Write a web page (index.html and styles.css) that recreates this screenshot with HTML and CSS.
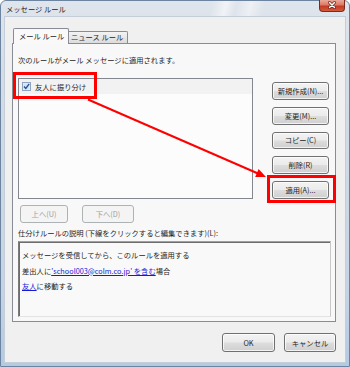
FILE: index.html
```html
<!DOCTYPE html>
<html lang="ja">
<head>
<meta charset="utf-8">
<title>メッセージ ルール</title>
<link rel="stylesheet" href="styles.css">
</head>
<body>
<div class="window">
  <div class="titlebar">
    <span class="title">メッセージ ルール</span>
    <div class="close">
      <svg width="24" height="11" viewBox="0 0 24 11">
        <path d="M9.5 2.5 L14.5 7.5 M14.5 2.5 L9.5 7.5" stroke="#6b1d12" stroke-width="3" stroke-linecap="round"/>
        <path d="M9.5 2.5 L14.5 7.5 M14.5 2.5 L9.5 7.5" stroke="#ffffff" stroke-width="1.5" stroke-linecap="round"/>
      </svg>
    </div>
  </div>
  <div class="client">
    <div class="tabs">
      <div class="tab active">メール ルール</div>
      <div class="tab">ニュース ルール</div>
    </div>
    <div class="panel">
      <div class="intro">次のルールがメール メッセージに適用されます。</div>
      <div class="rules-row">
        <div class="list">
          <div class="item">
            <span class="check">
              <svg width="9" height="9" viewBox="0 0 9 9">
                <rect x="0.5" y="0.5" width="8" height="8" fill="#eaf3fb" stroke="#8ea3bd"/>
                <rect x="1.5" y="1.5" width="6" height="6" fill="#cfe3f5"/>
                <path d="M2 4.5 L3.8 6.5 L7.2 1.8" fill="none" stroke="#2a4f8a" stroke-width="1.3"/>
              </svg>
            </span>
            <span>友人に振り分け</span>
          </div>
        </div>
        <div class="btn-col">
          <button class="btn">新規作成(N)...</button>
          <button class="btn">変更(M)...</button>
          <button class="btn">コピー(C)</button>
          <button class="btn">削除(R)</button>
          <button class="btn">適用(A)...</button>
        </div>
      </div>
      <div class="move-row">
        <button class="btn disabled up">上へ(U)</button>
        <button class="btn disabled down">下へ(D)</button>
      </div>
      <div class="label">仕分けルールの説明 (下線をクリックすると編集できます)(L):</div>
      <div class="desc">
        <div>メッセージを受信してから、このルールを適用する</div>
        <div>差出人に<a class="link">'school003@colm.co.jp' を含む</a>場合</div>
        <div><a class="link">友人</a>に移動する</div>
      </div>
    </div>
    <div class="footer">
      <button class="btn ok">OK</button>
      <button class="btn cancel">キャンセル</button>
    </div>
  </div>
  <svg class="annot" width="350" height="367" viewBox="0 0 350 367">
    <rect x="14.5" y="73.5" width="81" height="24" fill="none" stroke="#ff0000" stroke-width="3"/>
    <rect x="268.5" y="176.5" width="66" height="25" fill="none" stroke="#ff0000" stroke-width="3"/>
    <line x1="88" y1="99.5" x2="258" y2="173.5" stroke="#ff0000" stroke-width="2"/>
    <polygon points="266,177 255.2,176.9 258.6,169.1" fill="#ff0000"/>
  </svg>
</div>
</body>
</html>
```

FILE: styles.css
```css
* { box-sizing: border-box; }
html, body { margin: 0; padding: 0; }
body {
  width: 350px;
  height: 367px;
  overflow: hidden;
  background: #ffffff;
  font-family: "Noto Sans CJK JP", "Noto Sans", sans-serif;
  font-size: 7.3px;
  color: #1e1e1e;
}
.window {
  position: relative;
  width: 350px;
  height: 367px;
  display: flex;
  flex-direction: column;
  padding: 0 4px 4px 4px;
  border: 1px solid #6d84a0;
  border-radius: 6px 6px 0 0;
  background:
    linear-gradient(104deg, rgba(255,255,255,0) 60%, rgba(255,255,255,0.55) 64%, rgba(255,255,255,0) 67%, rgba(255,255,255,0.45) 71%, rgba(255,255,255,0) 75%) top / 100% 20px no-repeat,
    linear-gradient(to bottom, #dfe5ec 0%, #d4dde7 20%, #c4d4e5 80%, #b3cae3 100%);
}
.titlebar {
  height: 16px;
  display: flex;
  justify-content: space-between;
  align-items: flex-start;
}
.title {
  padding-left: 1px;
  line-height: 16px;
  color: #222;
}
.close {
  width: 26px;
  height: 12px;
  margin-top: -1px;
  border: 1px solid #7b2a20;
  border-top: none;
  border-radius: 0 0 4px 4px;
  background: linear-gradient(to bottom, #eaa89a 0%, #dc7a66 45%, #c53a22 55%, #d45a3c 100%);
  display: flex;
  justify-content: center;
  align-items: center;
}
.client {
  flex: 1;
  background: #f0f0f0;
  box-shadow: 0 0 0 1px #c3ced9;
  padding: 11px 9px 10px 7px;
  display: flex;
  flex-direction: column;
}
.tabs {
  display: flex;
  align-items: flex-end;
  height: 15px;
  padding-left: 1px;
  position: relative;
  z-index: 1;
}
.tab {
  width: 59px;
  height: 12px;
  line-height: 11px;
  padding-left: 2px;
  border: 1px solid #898c95;
  border-left: none;
  border-bottom: none;
  border-radius: 0 2px 0 0;
  background: linear-gradient(to bottom, #f3f3f3, #dcdcdc);
  white-space: nowrap;
}
.tab.active {
  width: 56px;
  height: 16px;
  margin-bottom: -1px;
  line-height: 14px;
  padding-left: 5px;
  border-left: 1px solid #898c95;
  border-radius: 2px 2px 0 0;
  background: #f9f9f9;
}
.panel {
  height: 279px;
  border: 1px solid #898c95;
  background: #f8f8f8;
  padding: 10px 6px 4px 5px;
  display: flex;
  flex-direction: column;
}
.intro, .label {
  height: 12px;
  line-height: 12px;
  white-space: nowrap;
}
.rules-row {
  display: flex;
  gap: 19px;
  margin-top: 12px;
  height: 121px;
}
.list {
  width: 235px;
  border: 1px solid #828790;
  background: #fcfcfc;
}
.item {
  height: 15px;
  display: flex;
  align-items: center;
  gap: 4px;
  padding-left: 3px;
  background: #f2f2f2;
}
.check { display: flex; }
.btn-col {
  width: 57px;
  display: flex;
  flex-direction: column;
  gap: 7px;
  padding-top: 4px;
}
.btn {
  height: 18px;
  width: 57px;
  padding: 0;
  font: inherit;
  color: #1e1e1e;
  border: 1px solid #707070;
  border-radius: 3px;
  background: linear-gradient(to bottom, #f3f3f3 0%, #ebebeb 48%, #dddddd 52%, #cfcfcf 100%);
  box-shadow: inset 0 0 0 1px rgba(255,255,255,0.75);
  white-space: nowrap;
}
.move-row {
  display: flex;
  gap: 14px;
  margin-top: 6px;
  padding-left: 2px;
}
.btn.disabled {
  border-color: #adb2b5;
  background: #f4f4f4;
  box-shadow: none;
  color: #9d9d9d;
}
.btn.up { width: 48px; }
.btn.down { width: 52px; }
.label { margin-top: 4px; }
.desc {
  margin-top: 2px;
  height: 76px;
  width: 313px;
  border-style: solid;
  border-width: 1px;
  border-color: #a0a0a0 #c8c8c8 #e3e3e3 #7a7a7a;
  box-shadow: inset 1px 1px 0 #6d6d6d;
  background: #f9f9f9;
  padding: 6px 3px 0 3px;
  line-height: 15.5px;
  white-space: nowrap;
}
.link {
  color: #1818d8;
  text-decoration: underline;
}
.footer {
  display: flex;
  justify-content: flex-end;
  gap: 9px;
  margin-top: 11px;
}
.btn.ok { width: 53px; height: 19px; }
.btn.cancel { width: 52px; height: 19px; }
.annot {
  position: absolute;
  left: -1px;
  top: -1px;
  pointer-events: none;
}
```
